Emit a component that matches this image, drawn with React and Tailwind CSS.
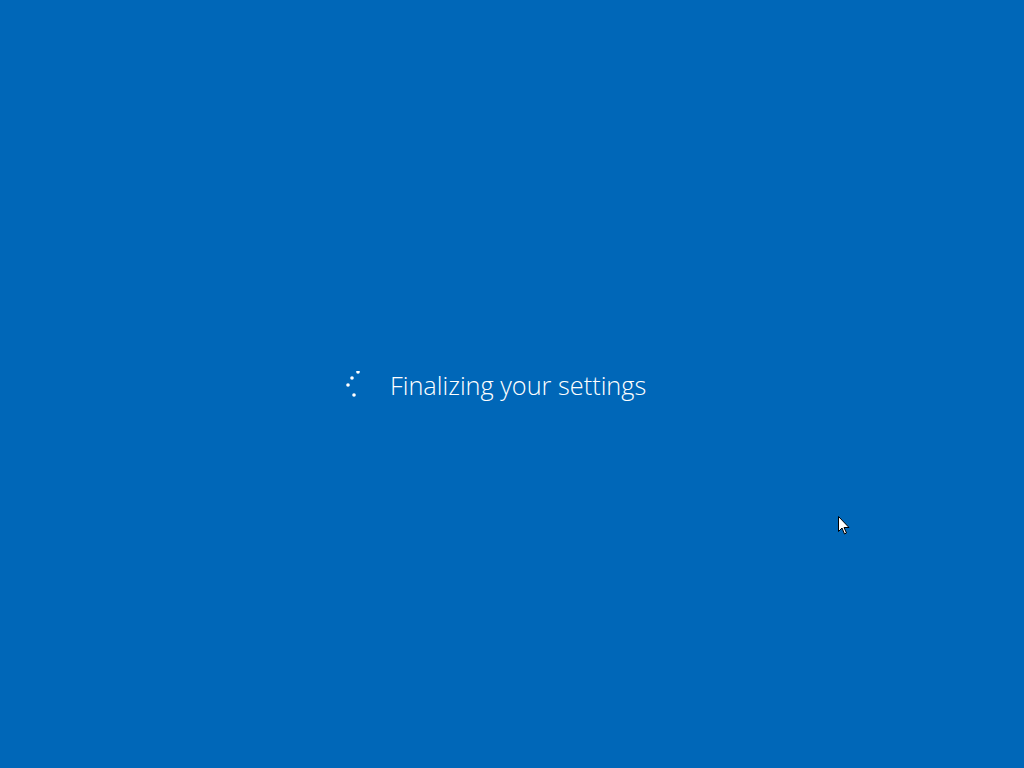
export default function App() {
  const dots = [
    [12, 1],
    [6, 7],
    [2, 14],
    [8, 24],
  ];

  return (
    <div className="relative w-full h-screen bg-[#0067b8] overflow-hidden">
      <div className="flex h-full items-center pl-[346px] pt-[4px]">
        <svg width="16" height="28" viewBox="0 0 16 28" className="mt-[-3px]">
          {dots.map(([x, y], i) => (
            <circle key={i} cx={x} cy={y} r="1.8" fill="#ffffff" />
          ))}
        </svg>
        <span
          className="ml-[28px] text-white text-[25.3px] font-light"
          style={{ fontFamily: '"Open Sans", "Noto Sans", sans-serif' }}
        >
          Finalizing your settings
        </span>
      </div>

      <svg
        className="absolute left-[838px] top-[516px]"
        width="12"
        height="20"
        viewBox="0 0 12 20"
      >
        <path
          d="M0.5 0.5 L0.5 15.5 L4 12 L6.5 18 L8.5 17 L6 11.5 L11 11.5 Z"
          fill="#ffffff"
          stroke="#000000"
          strokeWidth="1"
          strokeLinejoin="miter"
        />
      </svg>
    </div>
  );
}
